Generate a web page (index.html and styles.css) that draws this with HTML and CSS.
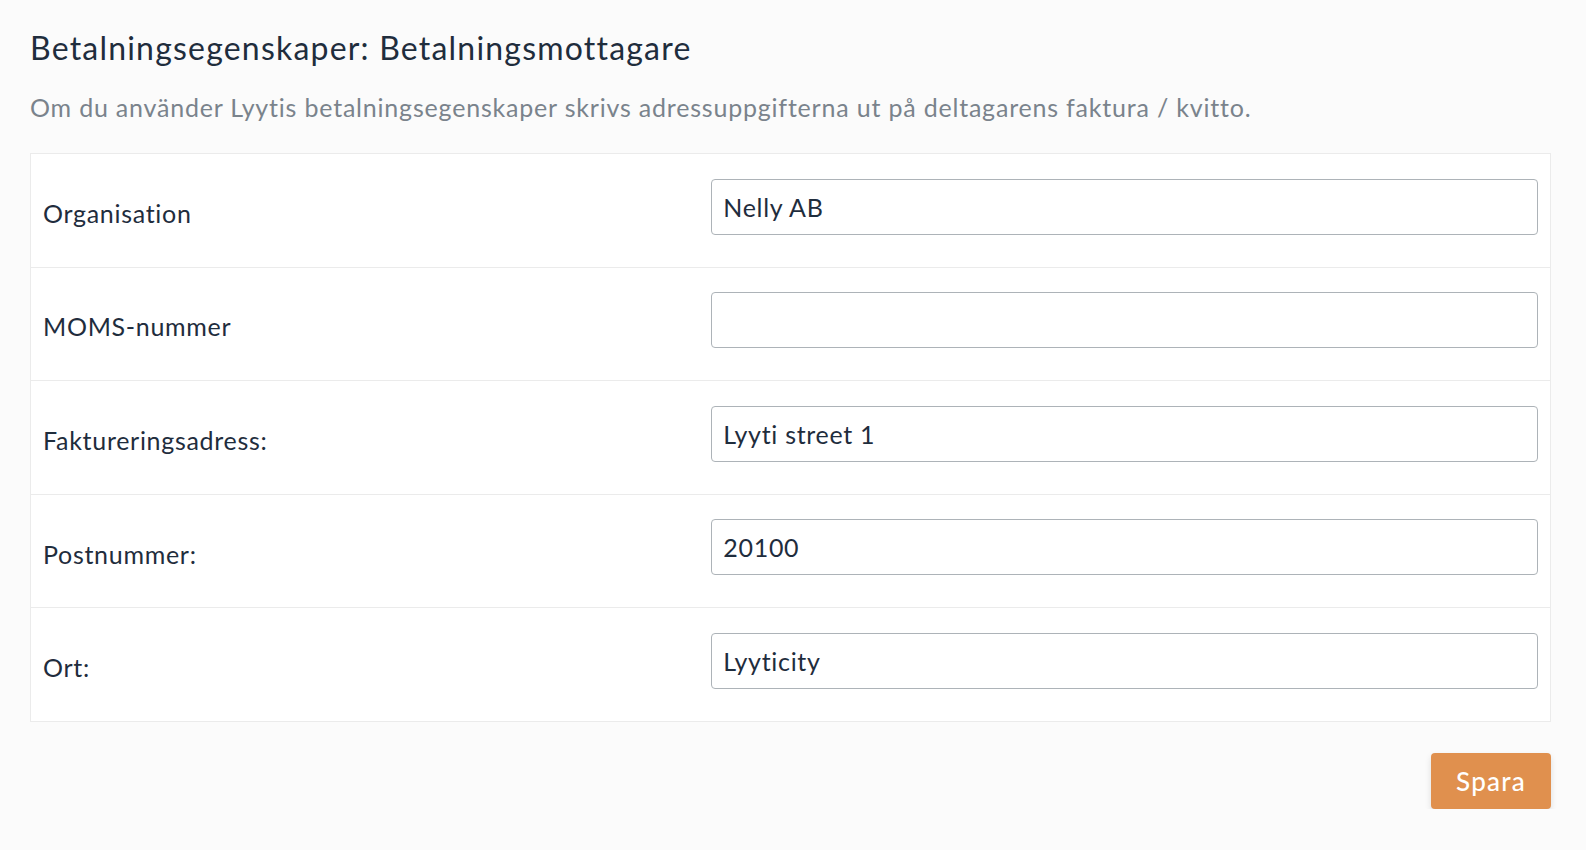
FILE: index.html
```html
<!DOCTYPE html>
<html lang="sv">
  <head>
    <meta charset="UTF-8" />
    <meta name="viewport" content="width=device-width, initial-scale=1.0" />
    <title>Betalningsmottagare - Lyyti</title>
    <link rel="stylesheet" href="styles.css">
  </head>
  <body>
    <div class="page">
      <h2 class="title">Betalningsegenskaper: Betalningsmottagare</h2>
      <p class="lead">
        Om du använder Lyytis betalningsegenskaper skrivs adressuppgifterna ut på deltagarens faktura / kvitto.
      </p>

      <table class="form-table">
        <tr>
          <td class="label">Organisation</td>
          <td class="field"><input type="text" value="Nelly AB" /></td>
        </tr>
        <tr>
          <td class="label">MOMS-nummer</td>
          <td class="field"><input type="text" value="" /></td>
        </tr>
        <tr>
          <td class="label">Faktureringsadress:</td>
          <td class="field"><input type="text" value="Lyyti street 1" /></td>
        </tr>
        <tr>
          <td class="label">Postnummer:</td>
          <td class="field"><input type="text" value="20100" /></td>
        </tr>
        <tr>
          <td class="label">Ort:</td>
          <td class="field"><input type="text" value="Lyyticity" /></td>
        </tr>
      </table>

      <div class="actions">
        <button class="save">Spara</button>
      </div>
    </div>
  </body>
</html>
```

FILE: styles.css
```css
body {
  margin: 0;
  background: #fbfbfb;
  font-family: Lato, "Open Sans", sans-serif;
  color: #1f2d3d;
}
.page {
  padding: 28px 35px 0 30px;
}
.title {
  font-size: 32px;
  font-weight: 400;
  letter-spacing: 1.2px;
  line-height: 40px;
  margin: 0;
}
.lead {
  font-size: 25px;
  letter-spacing: 0.8px;
  line-height: 32px;
  color: #7a838c;
  margin: 23px 0 30px;
}
.form-table {
  width: 100%;
  border-collapse: collapse;
  background: white;
  border: 1px solid #ebebeb;
}
.form-table td {
  border-top: 1px solid #ebebeb;
  padding: 24.5px 12px 32.1px;
  height: 56px;
}
.form-table .label {
  width: 44%;
  font-size: 25px;
  letter-spacing: 0.7px;
  vertical-align: middle;
  padding-top: 29px;
  padding-bottom: 24px;
}
.form-table .field {
  vertical-align: top;
}
.form-table input {
  display: block;
  box-sizing: border-box;
  width: 100%;
  height: 56px;
  border: 1px solid #adb3b8;
  border-radius: 4px;
  padding: 0 11px;
  font-family: inherit;
  font-size: 25px;
  letter-spacing: 0.7px;
  color: #1f2d3d;
  background: white;
}
.actions {
  display: flex;
  justify-content: flex-end;
  margin-top: 31px;
}
.save {
  width: 120px;
  height: 56px;
  border: none;
  border-radius: 4px;
  background: #e0904e;
  color: white;
  font-family: inherit;
  font-size: 26px;
  font-weight: 500;
  letter-spacing: 1.2px;
  box-shadow: 0 3px 6px rgba(0, 0, 0, 0.12);
  cursor: pointer;
}
```
